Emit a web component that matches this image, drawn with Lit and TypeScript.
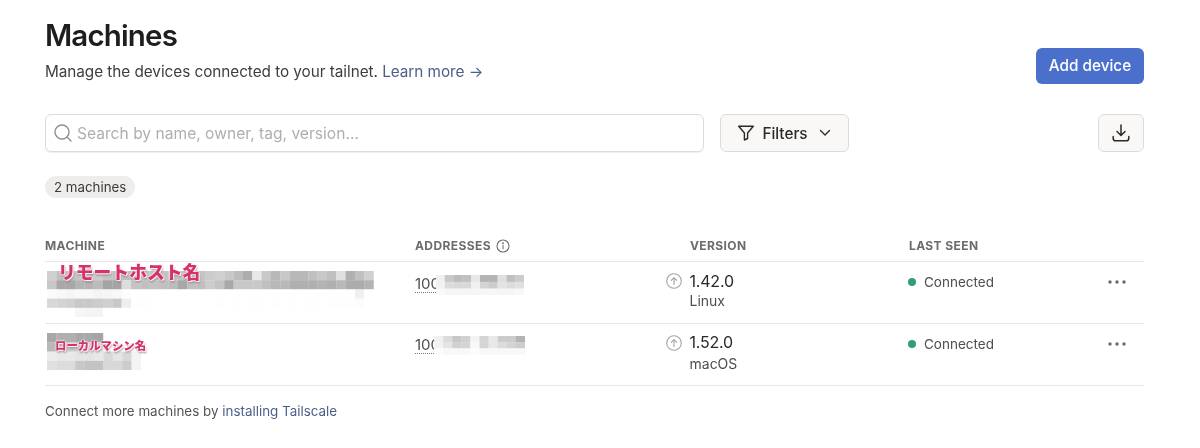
import { LitElement, html, css, svg } from "lit";
import { customElement } from "lit/decorators.js";

function mosaic(rows: string[], w: number, h: number) {
  const grid = rows.map((r) => r.split(" "));
  const cols = Math.max(...grid.map((r) => r.length));
  return html`<svg class="mosaic" width=${cols * w} height=${rows.length * h} viewBox="0 0 ${cols * w} ${rows.length * h}">
    ${grid.map((r, y) =>
      r.map((c, x) => svg`<rect x=${x * w} y=${y * h} width=${w + 0.2} height=${h + 0.2} fill="#${c}${c}${c}"></rect>`)
    )}
  </svg>`;
}

const M1 = [
  "d0 c0 c0 c4 c4 cc c4 c0 c0 c4 c4 c4 c4 c4 c4 c0 c4 cc d0 c8 bc ac e8 c8 b8 c8 b8 b8 c0 c8 c0 e0 b0 c0 d0",
  "c8 a8 a8 b4 b4 bc a4 a4 dc c4 c0 c4 c0 bc a8 c0 c0 cc c4 a8 c8 c8 c8 c0 b8 b8 b0 b0 b0 b4 b0 b8 ac ac b4",
  "fb f8 f6 f8 f8 f4 f6 f8 fd ff ff ff ff ff ff ff ff ff ff ff ff ff ff ff ff ff ff ff ff ff ff ff ff f0 ff",
  "d8 d4 d0 c8 c8 cc d0 c8 ee fe fe ff ff ff ff ff ff ff fe ff fe ff fe ff fe ff fe ff fe ff fe fe fe fc ff",
  "ff ff ff f6 f4 f4 ff ff ff ff ff ff ff ff ff ff ff ff ff ff ff ff ff ff ff ff ff ff ff ff ff ff ff ff ff",
];
const M2 = [
  "a8 b0 b0 a8 a8 a4 ff ff ff ff",
  "b8 c8 c8 c8 d0 d8 ff ff ff ff",
  "ec e8 e8 e4 e4 e8 d8 e4 d8 f4",
  "e0 dc dc c8 c4 c4 d8 d8 cc f4",
];
const A1 = [
  "f0 c8 bc c0 e8 b4 b4 e0 c0 cc",
  "f2 dc d8 d8 f0 d4 cc e4 dc e0",
  "fa f6 f6 f6 f6 f6 f6 f6 f6 f8",
];
const A2 = [
  "f0 dc c8 d0 f4 d4 e8 cc cc b4",
  "f2 e4 d0 d4 f8 d4 e8 dc d4 cc",
  "fc f8 f8 f8 fc f8 f8 f8 f8 f8",
];

const upIcon = html`<svg class="up" viewBox="0 0 16 16" width="16" height="16" fill="none" stroke="#a3a3a3" stroke-width="1.1" stroke-linecap="round" stroke-linejoin="round">
  <circle cx="8" cy="8" r="7.3"></circle><path d="M8 11.4V4.8M5.3 7.4 8 4.7l2.7 2.7"></path></svg>`;
const moreIcon = html`<svg class="more" viewBox="0 0 18 4" width="18" height="4" fill="#6a6a6a">
  <circle cx="2" cy="2" r="1.7"></circle><circle cx="9" cy="2" r="1.7"></circle><circle cx="16" cy="2" r="1.7"></circle></svg>`;

@customElement("app-root")
export class AppRoot extends LitElement {
  static styles = css`
    :host {
      display: block;
      height: 448px;
      overflow: hidden;
      background: #fff;
      color: #232222;
      font-family: Inter, "Noto Sans CJK JP", sans-serif;
    }
    .page { padding: 17px 56px 0 45px; filter: blur(0.35px); }
    .head { display: flex; justify-content: space-between; align-items: flex-end; }
    h1 { margin: 0; font-size: 29.5px; line-height: 36px; font-weight: 600; letter-spacing: -0.85px; color: #1f1e1e; }
    .sub { margin: 6.5px 0 0; font-size: 15.3px; line-height: 24px; letter-spacing: -0.04px; color: #3f3e3e; }
    a { color: #4b5f88; text-decoration: none; }
    .add {
      width: 108px; height: 36px; border-radius: 6px; background: #4b70cc; color: #fff;
      display: flex; align-items: center; justify-content: center; font-size: 15.3px; font-weight: 500;
    }
    .tools { display: flex; margin-top: 30.5px; height: 38px; }
    .search {
      width: 659px; box-sizing: border-box; border: 1px solid #dcdbda; border-radius: 6px;
      display: flex; align-items: center; gap: 5px; padding-left: 8px; color: #afafaf; font-size: 15.6px;
      box-shadow: 0 1px 1px #eeeeee;
    }
    .btn {
      box-sizing: border-box; height: 38px; border: 1px solid #dcdbda; border-radius: 6px; background: #f9f8f7;
      display: flex; align-items: center; justify-content: center; font-size: 15.3px; font-weight: 500; color: #2b2a2a;
    }
    .filters { margin-left: 16px; width: 129px; gap: 8px; }
    .filters .chev { margin-left: 3px; }
    .dl { margin-left: auto; width: 46px; }
    .pill {
      display: inline-flex; align-items: center; height: 22px; margin-top: 24px; padding: 0 9px; border-radius: 11px;
      background: #eeedeb; font-size: 13.3px; color: #3a3939;
    }
    .row { display: grid; grid-template-columns: 370px 251px 243px 1fr; border-bottom: 1px solid #e8e7e6; }
    .th { margin-top: 32px; height: 31px; align-items: center; font-size: 12px; font-weight: 700; letter-spacing: 0.4px; color: #6d6c6c; }
    .th > div { display: flex; align-items: center; gap: 5px; }
    .th .ver { padding-left: 24px; }
    .tr { height: 62px; box-sizing: border-box; }
    .machine { position: relative; padding: 9px 0 0 2px; }
    .mosaic { display: block; filter: blur(0.7px); position: relative; }
    .label {
      position: absolute; font-weight: 900; color: #d6316d; white-space: nowrap;
      text-shadow: 0 0 2px #fff, 0 0 2px #fff, 1px 1px 1px #fff, 1px 2px 2px #99667a;
    }
    .l1 { left: 13px; top: 0; font-size: 17.8px; line-height: 22px; }
    .l2 { left: 10px; top: 13px; font-size: 11.4px; line-height: 18px; }
    .addr { display: flex; align-items: flex-start; padding-top: 13px; font-size: 15px; line-height: 18px; color: #4f4e4e; }
    .num { height: 17px; border-bottom: 1px dotted #777; }
    .addr .mosaic { margin-left: -4px; background: #fff; }
    .a2 { padding-top: 12px; }
    .a2 .mosaic { margin-left: -6px; }
    .ver-cell { display: flex; gap: 7.5px; padding-top: 10px; }
    .up { margin-top: 1px; flex: none; }
    .vn { font-size: 16px; line-height: 19px; color: #2b2a2a; letter-spacing: -0.2px; }
    .os { font-size: 14px; line-height: 20px; color: #4f4e4e; }
    .a-os { margin-top: 2px; }
    .m2v { margin-top: -1px; }
    .seen { display: flex; align-items: flex-start; padding-top: 11px; font-size: 13.5px; line-height: 18px; color: #4f4e4e; position: relative; }
    .dot { width: 8px; height: 8px; border-radius: 50%; background: #2f9e77; margin: 5px 8px 0 -1px; flex: none; }
    .more { position: absolute; right: 18px; top: 18px; }
    .foot { margin-top: 16px; font-size: 13.4px; line-height: 18px; color: #555454; }
  `;

  render() {
    return html`<div class="page">
      <div class="head">
        <div>
          <h1>Machines</h1>
          <p class="sub">Manage the devices connected to your tailnet. <a href="#">Learn more →</a></p>
        </div>
        <div class="add">Add device</div>
      </div>

      <div class="tools">
        <div class="search">
          <svg viewBox="0 0 18 18" width="18" height="18" fill="none" stroke="#8f8f8f" stroke-width="1.4" stroke-linecap="round">
            <circle cx="8" cy="8" r="7"></circle><path d="m13 13 4 4"></path>
          </svg>
          <span>Search by name, owner, tag, version...</span>
        </div>
        <div class="btn filters">
          <svg viewBox="0 0 16 16" width="16" height="16" fill="none" stroke="#2b2a2a" stroke-width="1.4" stroke-linejoin="round">
            <path d="M.7 1.2h14.6L9.6 8v5.5L6.4 15V8z"></path>
          </svg>
          <span>Filters</span>
          <svg class="chev" viewBox="0 0 12 8" width="12" height="8" fill="none" stroke="#2b2a2a" stroke-width="1.4" stroke-linecap="round" stroke-linejoin="round">
            <path d="m1.5 1.5 4.5 4.5 4.5-4.5"></path>
          </svg>
        </div>
        <div class="btn dl">
          <svg viewBox="0 0 18 18" width="18" height="18" fill="none" stroke="#2b2a2a" stroke-width="1.5" stroke-linecap="round" stroke-linejoin="round">
            <path d="M9 1v10M5 7.5l4 4 4-4M1.2 12.5v1.7a2.6 2.6 0 0 0 2.6 2.6h10.4a2.6 2.6 0 0 0 2.6-2.6v-1.7"></path>
          </svg>
        </div>
      </div>

      <div class="pill">2 machines</div>

      <div class="row th">
        <div>MACHINE</div>
        <div>ADDRESSES
          <svg viewBox="0 0 14 14" width="14" height="14" fill="none" stroke="#6d6c6c" stroke-width="1.1" stroke-linecap="round">
            <circle cx="7" cy="7" r="6"></circle><path d="M7 6.5v3.3"></path><circle cx="7" cy="4.3" r=".4"></circle>
          </svg>
        </div>
        <div class="ver">VERSION</div>
        <div>LAST SEEN</div>
      </div>

      <div class="row tr">
        <div class="machine">${mosaic(M1, 9.33, 9.2)}<span class="label l1">リモートホスト名</span></div>
        <div class="addr"><span class="num">100</span>${mosaic(A1, 8.8, 6.8)}</div>
        <div class="ver-cell">${upIcon}<div><div class="vn">1.42.0</div><div class="os">Linux</div></div></div>
        <div class="seen"><span class="dot"></span>Connected${moreIcon}</div>
      </div>
      <div class="row tr">
        <div class="machine">${mosaic(M2, 9.4, 9.3)}<span class="label l2">ローカルマシン名</span></div>
        <div class="addr a2"><span class="num">100</span>${mosaic(A2, 9.1, 6.2)}</div>
        <div class="ver-cell">${upIcon}<div class="m2v"><div class="vn">1.52.0</div><div class="os a-os">macOS</div></div></div>
        <div class="seen"><span class="dot"></span>Connected${moreIcon}</div>
      </div>

      <div class="foot">Connect more machines by <a href="#">installing Tailscale</a></div>
    </div>`;
  }
}
